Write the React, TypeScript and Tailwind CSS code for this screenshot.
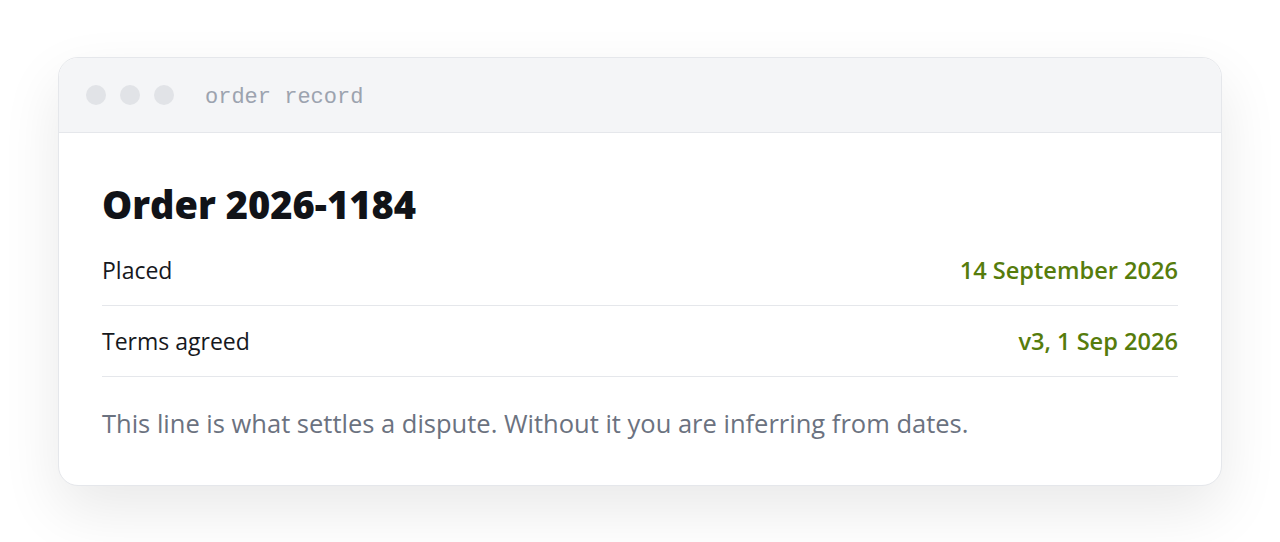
import React from 'react';

const rows = [
  { label: 'Placed', value: '14 September 2026' },
  { label: 'Terms agreed', value: 'v3, 1 Sep 2026' },
];

const App: React.FC = () => {
  return (
    <div
      className="min-h-screen bg-white px-[58px] pt-[57px] pb-[58px]"
      style={{ fontFamily: '"Open Sans", "Noto Sans", sans-serif' }}
    >
      <div className="rounded-[20px] border border-gray-200 bg-white shadow-[0_24px_60px_rgba(0,0,0,0.09)] overflow-hidden">
        {/* Window bar */}
        <div className="flex items-center h-[75px] px-[27px] bg-[#f4f5f7] border-b border-gray-200">
          <div className="flex gap-[14px]">
            <span className="w-5 h-5 rounded-full bg-[#e1e3e7]" />
            <span className="w-5 h-5 rounded-full bg-[#e1e3e7]" />
            <span className="w-5 h-5 rounded-full bg-[#e1e3e7]" />
          </div>
          <span
            className="ml-[31px] pt-[4px] text-[22px] text-[#9ca3af]"
            style={{ fontFamily: '"Liberation Mono", "DejaVu Sans Mono", monospace' }}
          >
            order record
          </span>
        </div>

        {/* Body */}
        <div className="px-[43px] pt-[49px] pb-[44px]">
          <h1 className="text-[38px] leading-[45px] font-extrabold text-[#111318] mb-2">
            Order 2026-1184
          </h1>
          {rows.map(row => (
            <div
              key={row.label}
              className="flex items-center justify-between py-[17px] border-b border-gray-200 leading-[36px]"
            >
              <span className="text-[23px] text-[#16181d]">{row.label}</span>
              <span className="text-[23.6px] font-semibold text-[#567c0c]">{row.value}</span>
            </div>
          ))}
          <p className="mt-[28px] text-[25.5px] leading-[36px] text-[#6b7280]">
            This line is what settles a dispute. Without it you are inferring from dates.
          </p>
        </div>
      </div>
    </div>
  );
};

export default App;
